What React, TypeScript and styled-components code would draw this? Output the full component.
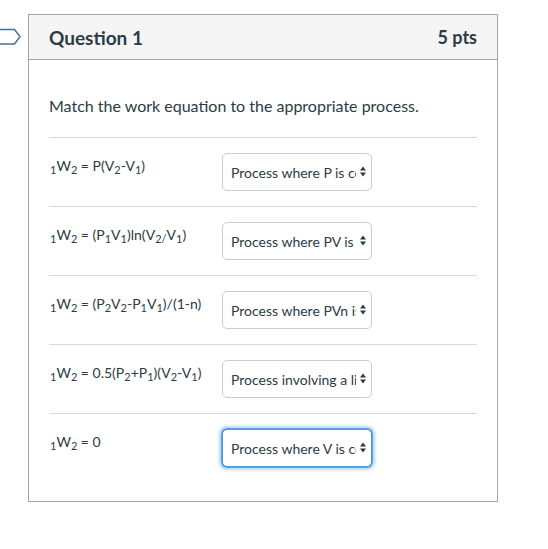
import React from "react";
import styled, { createGlobalStyle } from "styled-components";

const Global = createGlobalStyle`
  html, body { margin: 0; padding: 0; background: #ffffff; }
  body { font-family: Lato, "Open Sans", sans-serif; color: #2d3b45; }
  * { box-sizing: border-box; }
`;

const Page = styled.div`
  padding: 14px 0 0 28px;
`;

const Card = styled.div`
  position: relative;
  width: 470px;
  border: 1px solid #a5a5a5;
  background: #fff;
`;

const Flag = styled.svg`
  position: absolute;
  left: -29px;
  top: 13px;
`;

const Header = styled.div`
  height: 45px;
  background: #f5f5f5;
  border-bottom: 1px solid #a5a5a5;
  display: flex;
  align-items: center;
  justify-content: space-between;
  padding: 0 20px 0 20px;
`;

const Title = styled.h2`
  margin: 0;
  font-size: 19px;
  font-weight: 700;
  color: #2d3b45;
`;

const Points = styled.div`
  font-size: 18px;
  font-weight: 700;
  color: #2d3b45;
`;

const Body = styled.div`
  padding: 34px 20px 19px 20px;
`;

const Prompt = styled.p`
  margin: 0 0 19px 0;
  font-size: 16px;
  line-height: 24px;
  color: #2d3b45;
`;

const Row = styled.div`
  display: flex;
  align-items: flex-start;
  border-top: 1px solid #d5d9dc;
  padding: 15px 0;
`;

const Equation = styled.div`
  width: 173px;
  padding: 3px 0 0 1px;
  font-size: 14px;
  line-height: 20px;
  color: #2d3b45;
  sub {
    font-size: 11px;
    line-height: 0;
    vertical-align: -3px;
  }
`;

const SelectWrap = styled.div`
  position: relative;
  width: 150px;
  height: 38px;
`;

const Select = styled.select<{ $focused?: boolean }>`
  appearance: none;
  -webkit-appearance: none;
  width: 100%;
  height: 100%;
  margin: 0;
  padding: 0 15px 0 8px;
  font-family: Lato, "Open Sans", sans-serif;
  font-size: 14px;
  color: #2d3b45;
  background: #fff;
  border: 1px solid ${(p) => (p.$focused ? "#4f97df" : "#c7cdd1")};
  border-radius: 5px;
  box-shadow: ${(p) =>
    p.$focused ? "0 0 0 1px #5fa2e4, 0 0 3px 3px rgba(120, 175, 230, 0.5)" : "none"};
  outline: none;
`;

const Arrow = styled.svg`
  position: absolute;
  right: 6px;
  top: 13px;
  pointer-events: none;
`;

const rows: { eq: React.ReactNode; options: string[]; value: string }[] = [
  {
    eq: (
      <>
        <sub>1</sub>W<sub>2</sub> = P(V<sub>2</sub>-V<sub>1</sub>)
      </>
    ),
    options: ["Process where P is constant"],
    value: "Process where P is constant",
  },
  {
    eq: (
      <>
        <sub>1</sub>W<sub>2</sub> = (P<sub>1</sub>V<sub>1</sub>)ln(V<sub>2/</sub>V<sub>1</sub>)
      </>
    ),
    options: ["Process where PV is constant"],
    value: "Process where PV is constant",
  },
  {
    eq: (
      <>
        <sub>1</sub>W<sub>2</sub> = (P<sub>2</sub>V<sub>2</sub>-P<sub>1</sub>V<sub>1</sub>)/(1-n)
      </>
    ),
    options: ["Process where PVn is constant"],
    value: "Process where PVn is constant",
  },
  {
    eq: (
      <>
        <sub>1</sub>W<sub>2</sub> = 0.5(P<sub>2</sub>+P<sub>1</sub>)(V<sub>2</sub>-V<sub>1</sub>)
      </>
    ),
    options: ["Process involving a linear P-V relationship"],
    value: "Process involving a linear P-V relationship",
  },
  {
    eq: (
      <>
        <sub>1</sub>W<sub>2</sub> = 0
      </>
    ),
    options: ["Process where V is constant"],
    value: "Process where V is constant",
  },
];

export default function App() {
  return (
    <Page>
      <Global />
      <Card>
        <Flag width="22" height="18" viewBox="0 0 22 18">
          <path
            d="M-2 1.5 H14.5 L20 8.75 L14.5 16 H-2"
            fill="none"
            stroke="#4a7090"
            strokeWidth="1.4"
            strokeLinejoin="round"
          />
        </Flag>
        <Header>
          <Title>Question 1</Title>
          <Points>5 pts</Points>
        </Header>
        <Body>
          <Prompt>Match the work equation to the appropriate process.</Prompt>
          {rows.map((r, i) => (
            <Row key={i}>
              <Equation>{r.eq}</Equation>
              <SelectWrap>
                <Select $focused={i === rows.length - 1} defaultValue={r.value}>
                  {r.options.map((o) => (
                    <option key={o}>{o}</option>
                  ))}
                </Select>
                <Arrow width="6" height="11" viewBox="0 0 6 11">
                  <path d="M0 4.5 L3 0.5 L6 4.5 Z M0 6.5 L3 10.5 L6 6.5 Z" fill="#2d3b45" />
                </Arrow>
              </SelectWrap>
            </Row>
          ))}
        </Body>
      </Card>
    </Page>
  );
}
